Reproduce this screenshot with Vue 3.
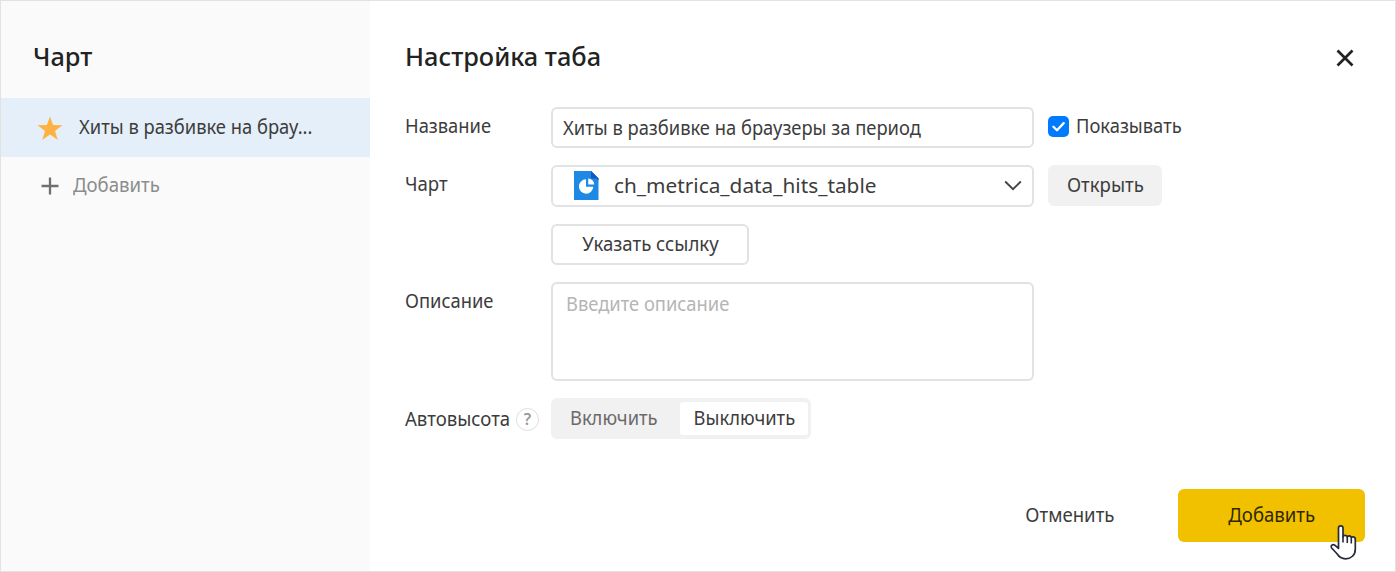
<script setup>
import { ref } from 'vue'

const name = ref('Хиты в разбивке на браузеры за период')
const autoHeight = ref(false)
const shown = ref(true)
</script>

<template>
  <div class="dialog">
    <aside class="sidebar">
      <h2 class="heading side-heading"><span class="t">Чарт</span></h2>
      <div class="tab">
        <svg class="star" width="26" height="25" viewBox="0 0 26 25">
          <path d="M13 .5l3.1 8.6 9.4.2-7.5 5.6 2.8 9.1-7.8-5.4L5.200 24 8 14.900.5 9.300l9.400-.2z" fill="#ffb244" />
        </svg>
        <span class="t narrow">Хиты в разбивке на брау...</span>
      </div>
      <div class="add">
        <svg width="18" height="18" viewBox="0 0 18 18">
          <path d="M9 .5v17M.5 9h17" stroke="#6f6f6f" stroke-width="2.3" fill="none" />
        </svg>
        <span class="t">Добавить</span>
      </div>
    </aside>

    <main class="main">
      <header class="head">
        <h2 class="heading"><span class="t">Настройка таба</span></h2>
        <svg class="close" width="18" height="18" viewBox="0 0 18 18">
          <path d="M1.500 1.500l15 15M16.500 1.500l-15 15" stroke="#222" stroke-width="2.700" fill="none" />
        </svg>
      </header>

      <section class="form">
        <div class="row">
          <div class="label"><span class="t narrow">Название</span></div>
          <div class="field input"><span class="t narrow">{{ name }}</span></div>
          <div class="check">
            <span class="box" :class="{ on: shown }">
              <svg width="21" height="21" viewBox="0 0 21 21">
                <path d="M5.400 10.800l3.600 3.500 6.700-7.200" stroke="#fff" stroke-width="2.300" fill="none" stroke-linecap="round" stroke-linejoin="round" />
              </svg>
            </span>
            <span class="t narrow">Показывать</span>
          </div>
        </div>

        <div class="row">
          <div class="label"><span class="t">Чарт</span></div>
          <div class="field select">
            <svg class="file" width="25" height="29" viewBox="0 0 25 29">
              <path d="M0 0h17l7.500 7.500V29H0z" fill="#1e88e5" />
              <path d="M17 0l7.500 7.500v2L17 3z" fill="#1565c0" />
              <path d="M17 0v7.500h7.500z" fill="#1258c0" />
              <path d="M12 8.300a7.200 7.200 0 1 0 7.300 7.500H12z" fill="#fff" />
              <path d="M14.200 7.600v6h6a6 6 0 0 0-6-6z" fill="#fff" />
            </svg>
            <span class="t latin">ch_metrica_data_hits_table</span>
            <svg class="chevron" width="18" height="11" viewBox="0 0 18 11">
              <path d="M1.200 1.500L9 9.200l7.800-7.700" stroke="#444" stroke-width="1.900" fill="none" />
            </svg>
          </div>
          <div class="button open"><span class="t">Открыть</span></div>
        </div>

        <div class="row">
          <div class="label"></div>
          <div class="button link"><span class="t">Указать ссылку</span></div>
        </div>

        <div class="row tall">
          <div class="label"><span class="t narrow">Описание</span></div>
          <div class="field area"><span class="t narrow">Введите описание</span></div>
        </div>

        <div class="row">
          <div class="label low"><span class="t">Автовысота</span><span class="help">?</span></div>
          <div class="segment">
            <div class="option first" :class="{ on: autoHeight }"><span class="t narrow">Включить</span></div>
            <div class="option" :class="{ on: !autoHeight }"><span class="t narrow">Выключить</span></div>
          </div>
        </div>
      </section>

      <footer class="foot">
        <div class="cancel"><span class="t">Отменить</span></div>
        <div class="submit"><span class="t">Добавить</span></div>
      </footer>
    </main>

    <svg class="cursor" width="30" height="38" viewBox="0 0 30 38">
      <path d="M9.500 21.500V4.200c0-3 4.500-3 4.500 0V13c0-2.300 4-2.200 4.300.4 0-2.200 3.900-2 4 .7.200-1.900 4-1.700 4 1.300v9.800c0 6-4.200 9.600-9.800 9.600-4.300 0-6.600-2-8.500-5L2.400 23.700c-1-2.300 1.500-4 3.700-2.300l3.400 3z" fill="#fff" stroke="#252b3a" stroke-width="1.700" stroke-linejoin="round" />
      <path d="M14 12.500v6M18.300 13.400v5.600M22.300 14.400v5" stroke="#252b3a" stroke-width="1.600" fill="none" />
    </svg>
  </div>
</template>

<style>
body { background: #fff; }
</style>

<style scoped>
* { box-sizing: border-box; }
.dialog {
  position: relative;
  display: flex;
  width: 1396px;
  height: 572px;
  border: 1px solid #e2e2e2;
  background: #fff;
  font: 20px/28px "Noto Sans", "Open Sans", sans-serif;
  color: #3c3c3c;
  overflow: hidden;
}
.t {
  display: inline-block;
  white-space: nowrap;
  transform: scaleX(.93);
  transform-origin: 0 50%;
}
.t.narrow { transform: scaleX(.917); }
.t.latin { transform: scaleX(1.04); }
.heading {
  margin: 0;
  font-size: 26px;
  line-height: 36px;
  font-weight: 500;
  color: #222;
}
.heading .t { transform: scaleX(.975); }

.sidebar { width: 369px; background: #fafafa; }
.side-heading { height: 97px; padding: 37px 0 0 32px; }
.tab {
  display: flex;
  align-items: center;
  height: 59px;
  padding: 0 0 2px 36px;
  background: #e5eff9;
}
.star { margin: 3px 16px 0 0; }
.add {
  display: flex;
  align-items: center;
  height: 55px;
  padding-left: 40px;
  color: #8c8c8c;
}
.add svg { margin: 2px 14px 0 0; }

.main { flex: 1; display: flex; flex-direction: column; padding: 0 30px 29px 35px; }
.head { display: flex; justify-content: space-between; height: 106px; padding-top: 37px; }
.close { margin: 11px 11px 0 0; }
.form { flex: 1; display: flex; flex-direction: column; gap: 17px; }
.row { display: flex; height: 41.300px; }
.row.tall { height: 99.300px; }
.label { width: 146px; padding-top: 5px; }
.label.low { display: flex; padding-top: 7px; }
.field {
  width: 483px;
  border: 2px solid #e2e2e2;
  border-radius: 6px;
  background: #fff;
}
.input { padding: 5px 0 0 10px; }
.select { display: flex; align-items: center; padding: 0 10px 0 21px; }
.file { margin-right: 15px; }
.chevron { margin-left: auto; }
.area { padding: 6px 0 0 13px; color: #b5b5b5; }
.check { display: flex; gap: 7px; padding: 5px 0 0 14px; }
.box { width: 21px; height: 21px; margin-top: 4px; border-radius: 5px; background: #ddd; }
.box.on { background: #007bff; }
.box svg { display: block; }
.button { display: flex; justify-content: center; align-items: center; height: 41px; border-radius: 6px; padding-bottom: 1px; }
.button .t, .option .t, .submit .t, .cancel .t { transform-origin: 50% 50%; }
.open { width: 114px; margin-left: 14px; background: #f1f1f1; }
.link { width: 198px; border: 2px solid #e2e2e2; }
.help {
  width: 23px;
  height: 23px;
  margin: 3px 0 0 -2px;
  border: 1.500px solid #dedede;
  border-radius: 50%;
  font-size: 16px;
  font-weight: 600;
  line-height: 21px;
  text-align: center;
  color: #999;
}
.segment {
  display: flex;
  width: 260px;
  height: 41px;
  padding: 4px 3px 4px 4px;
  border-radius: 6px;
  background: #f1f1f1;
}
.option { flex: 1; display: flex; align-items: center; justify-content: center; padding-bottom: 2px; border-radius: 3px; color: #6a6a6a; }
.option.first { flex: 0 0 125px; padding-right: 7px; }
.option.on { background: #fff; color: #3c3c3c; }

.foot { display: flex; justify-content: flex-end; align-items: center; height: 53px; }
.cancel { margin-right: 60px; }
.submit {
  display: flex;
  align-items: center;
  justify-content: center;
  width: 187px;
  height: 53px;
  padding: 0 0 2px 1px;
  border-radius: 6px;
  background: #f1c100;
  color: #2f2800;
}
.cancel { padding-bottom: 2px; }
.cursor { position: absolute; left: 1328px; top: 523px; }
</style>
